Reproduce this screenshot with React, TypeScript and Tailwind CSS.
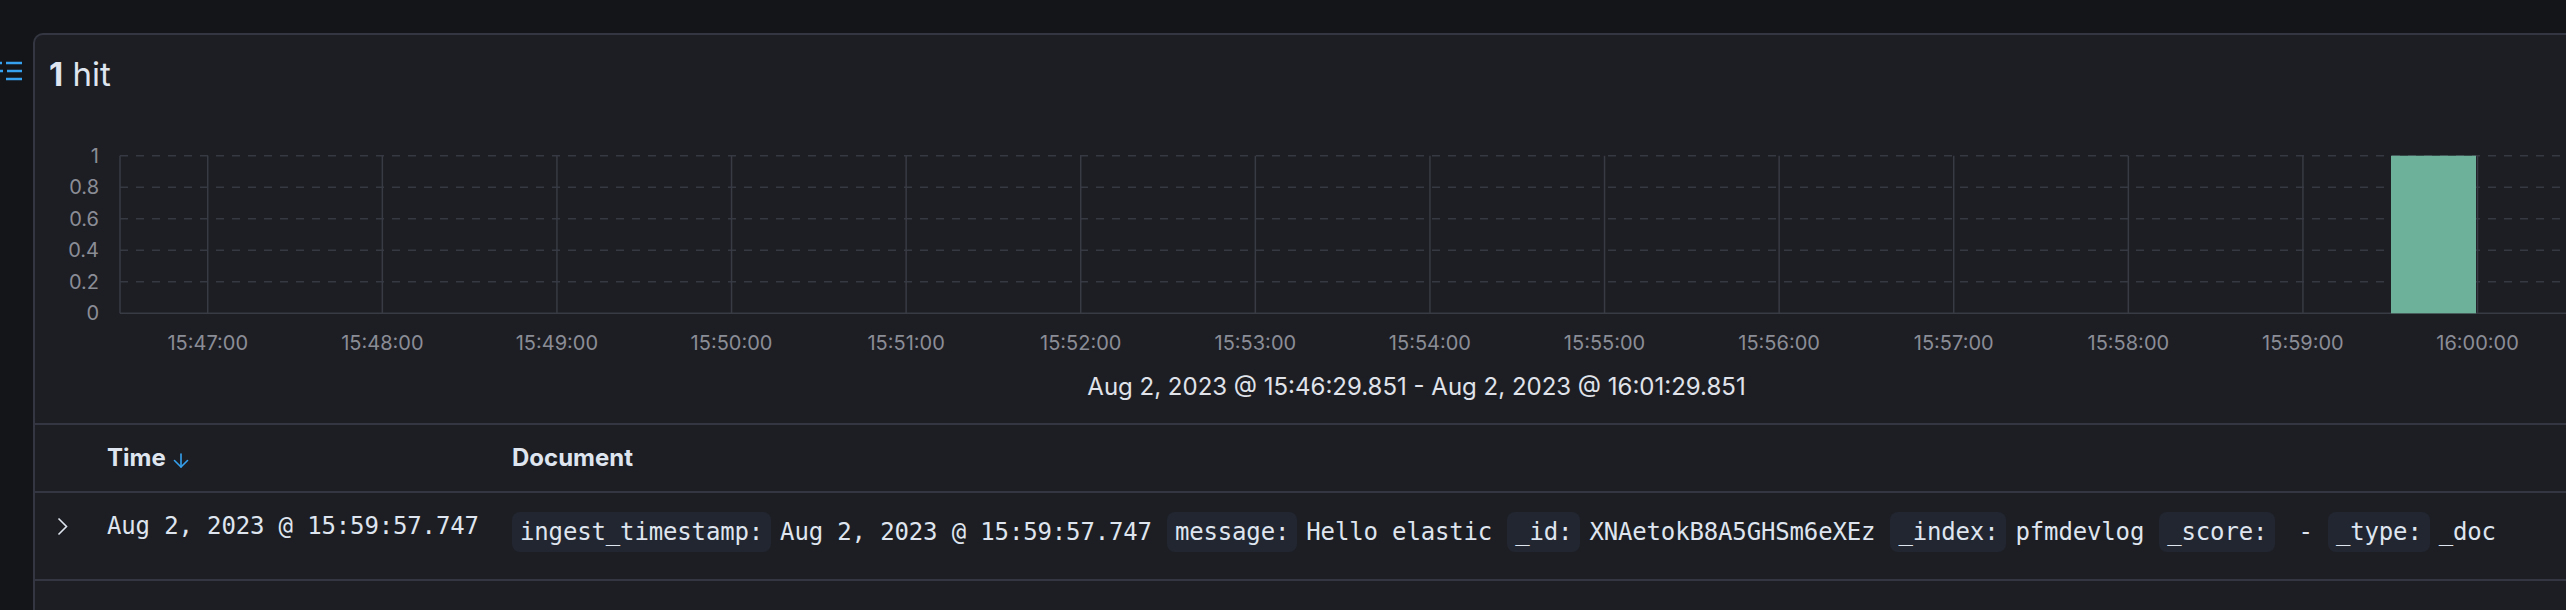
import React from 'react';

// chart geometry, in px inside the svg (svg starts at page x=35, y=94)
const plotLeft = 85;
const plotTop = 61.7;
const plotBottom = 219.3;
const minuteWidth = 174.6;
const firstTickOffset = 0.5025; // 15:46:29.851 -> 15:47:00

const yLabels = ['1', '0.8', '0.6', '0.4', '0.2', '0'];
const tickLabels = [
  '15:47:00',
  '15:48:00',
  '15:49:00',
  '15:50:00',
  '15:51:00',
  '15:52:00',
  '15:53:00',
  '15:54:00',
  '15:55:00',
  '15:56:00',
  '15:57:00',
  '15:58:00',
  '15:59:00',
  '16:00:00',
];

const fields = [
  { key: 'ingest_timestamp:', value: 'Aug 2, 2023 @ 15:59:57.747' },
  { key: 'message:', value: 'Hello elastic' },
  { key: '_id:', value: 'XNAetokB8A5GHSm6eXEz' },
  { key: '_index:', value: 'pfmdevlog' },
  { key: '_score:', value: '\u00a0-' },
  { key: '_type:', value: '_doc' },
];

const Histogram = () => {
  const rowGap = (plotBottom - plotTop) / 5;
  const tickX = (i: number) => plotLeft + (i + firstTickOffset) * minuteWidth;
  const plotRight = plotLeft + 15 * minuteWidth;

  return (
    <svg width={2531} height={277} className="block">
      {/* dashed grid */}
      {yLabels.slice(0, 5).map((_, i) => (
        <line
          key={'g' + i}
          x1={plotLeft}
          x2={plotRight}
          y1={plotTop + i * rowGap}
          y2={plotTop + i * rowGap}
          stroke="#363842"
          strokeWidth={1.5}
          strokeDasharray="8 8"
        />
      ))}
      {/* minute lines */}
      {[...tickLabels, '16:01:00'].map((_, i) => (
        <line
          key={'v' + i}
          x1={tickX(i)}
          x2={tickX(i)}
          y1={plotTop}
          y2={plotBottom}
          stroke="#393b44"
          strokeWidth={1.5}
        />
      ))}
      <line x1={plotLeft} x2={plotLeft} y1={plotTop} y2={plotBottom} stroke="#393b44" strokeWidth={1.5} />
      <line x1={plotLeft} x2={plotRight} y1={plotBottom} y2={plotBottom} stroke="#393b44" strokeWidth={1.5} />

      {/* the one bucket: 15:59:30 - 16:00:00 */}
      <rect x={2356} y={plotTop} width={85} height={plotBottom - plotTop} fill="#6db19a" />

      {yLabels.map((label, i) => (
        <text
          key={'y' + i}
          x={64}
          y={plotTop + i * rowGap + 7}
          textAnchor="end"
          fill="#8b8d96"
          fontSize={20}
          fontFamily="Inter, sans-serif"
        >
          {label}
        </text>
      ))}
      {tickLabels.map((label, i) => (
        <text
          key={'t' + i}
          x={tickX(i)}
          y={256}
          textAnchor="middle"
          fill="#8b8d96"
          fontSize={20}
          fontFamily="Inter, sans-serif"
        >
          {label}
        </text>
      ))}
    </svg>
  );
};

const App = () => {
  return (
    <div className="flex h-[610px] w-[2566px] overflow-hidden bg-[#141519] font-['Inter',sans-serif] text-[#dfe5ef]">
      <div className="w-[33px] shrink-0 pt-[59px]">
        <svg width={33} height={24} viewBox="0 59 33 24" className="block">
          <g stroke="#36a2ef" strokeWidth={2.5}>
            <line x1={0} y1={63} x2={2} y2={63} />
            <line x1={6} y1={63} x2={22} y2={63} />
            <line x1={0} y1={71} x2={3} y2={71} />
            <line x1={7} y1={71} x2={22} y2={71} />
            <line x1={6} y1={79} x2={22} y2={79} />
          </g>
        </svg>
      </div>

      <div className="mt-[33px] min-w-0 flex-1 overflow-hidden rounded-tl-[10px] border-l-2 border-t-2 border-[#343741] bg-[#1d1e24]">
        <div className="pl-[14px] pt-[19px] text-[33px] leading-[40px]">
          <span className="font-bold">1</span> hit
        </div>

        <Histogram />

        <div className="w-[2763px] text-center text-[24px] leading-[32px] text-[#e0e3ea]">
          Aug 2, 2023 @ 15:46:29.851 - Aug 2, 2023 @ 16:01:29.851
        </div>

        <div className="mt-[20px] flex h-[68px] items-center border-t-2 border-[#343741] text-[24px] font-bold">
          <div className="w-[72px] shrink-0" />
          <div className="flex w-[405px] shrink-0 items-center gap-[7px]">
            Time
            <svg width={16} height={15} viewBox="0 0 16 15" className="mt-[4px]">
              <g stroke="#36a2ef" strokeWidth={1.6} fill="none" strokeLinecap="round" strokeLinejoin="round">
                <line x1={8} y1={1} x2={8} y2={14} />
                <polyline points="1.5,7.5 8,14 14.5,7.5" />
              </g>
            </svg>
          </div>
          <div>Document</div>
        </div>

        <div className="flex h-[90px] items-start border-y-2 border-[#343741] font-['DejaVu_Sans_Mono',monospace] text-[24px] tracking-[-0.15px] text-[#dfe5ef]">
          <div className="mt-[13px] flex h-[40px] w-[72px] shrink-0 items-center pl-[22px]">
            <svg width={11} height={19} viewBox="0 0 11 19">
              <polyline points="1.5,1.5 9.5,9.5 1.5,17.5" fill="none" stroke="#dfe5ef" strokeWidth={1.6} />
            </svg>
          </div>
          <div className="mt-[13px] w-[405px] shrink-0 leading-[40px]">Aug 2, 2023 @ 15:59:57.747</div>
          <div className="mt-[19px] flex items-center whitespace-pre">
            {fields.map((f) => (
              <React.Fragment key={f.key}>
                <span className="mr-[9px] rounded-[8px] bg-[#222630] px-[8px] leading-[40px]">{f.key}</span>
                <span className="mr-[15px] leading-[40px]">{f.value}</span>
              </React.Fragment>
            ))}
          </div>
        </div>
      </div>
    </div>
  );
};

export default App;
